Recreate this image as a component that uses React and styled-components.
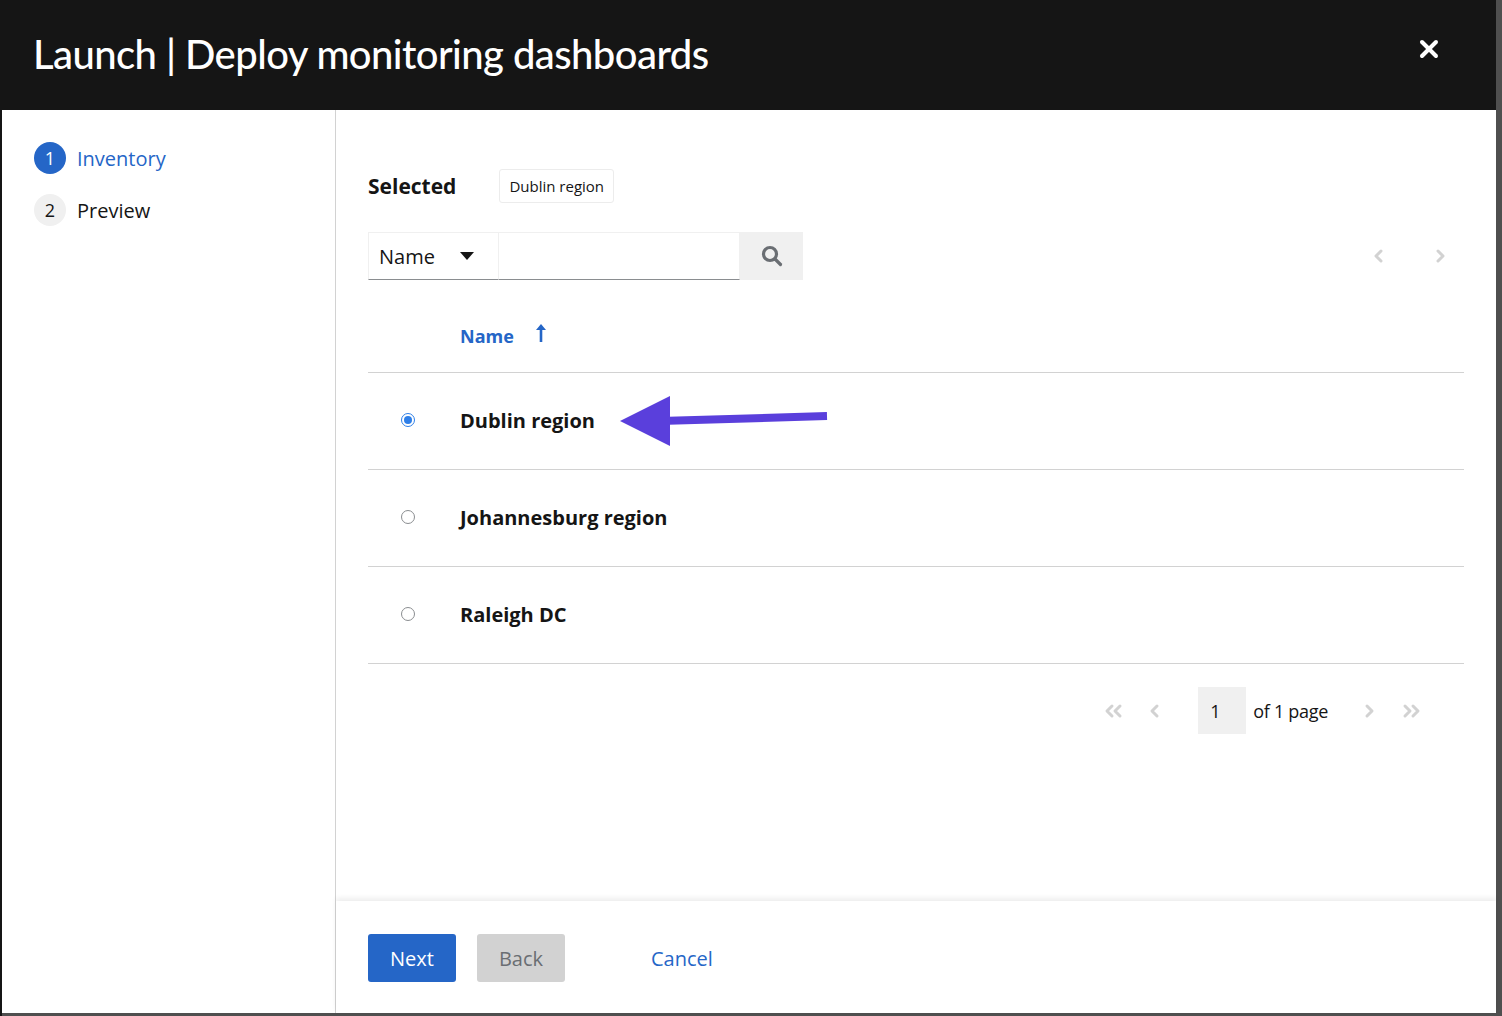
import React from "react";
import styled, { createGlobalStyle } from "styled-components";

const GlobalStyle = createGlobalStyle`
  *, *::before, *::after {
    box-sizing: border-box;
  }
  html, body {
    margin: 0;
    padding: 0;
    background: #151515;
  }
  body {
    font-family: "Open Sans", "Liberation Sans", sans-serif;
    color: #151515;
  }
`;

const Backdrop = styled.div`
  width: 1502px;
  height: 1016px;
  background: #4f4f4f;
  border-left: 2px solid #151515;
  padding: 0 6px 3px 0;
  display: flex;
`;

const Modal = styled.div`
  flex: 1;
  background: #fff;
  display: flex;
  flex-direction: column;
`;

const Header = styled.header`
  height: 110px;
  background: #151515;
  display: flex;
  align-items: center;
  justify-content: space-between;
  padding: 0 57px 0 31px;
  flex-shrink: 0;
`;

const Title = styled.h1`
  margin: 0 0 2px;
  color: #fff;
  font-family: "Lato", "Open Sans", sans-serif;
  font-weight: 500;
  font-size: 40px;
  letter-spacing: -0.57px;
`;

const CloseButton = styled.button`
  border: 0;
  background: none;
  padding: 0;
  margin-bottom: 12px;
  display: flex;
  color: #fff;
`;

const Body = styled.div`
  flex: 1;
  display: flex;
  min-height: 0;
`;

const Sidebar = styled.nav`
  width: 334px;
  flex-shrink: 0;
  border-right: 1px solid #d2d2d2;
  padding: 32px 0 0 32px;
  display: flex;
  flex-direction: column;
  gap: 20px;
`;

const Step = styled.div`
  display: flex;
  align-items: center;
  gap: 11px;
  font-size: 20px;
  color: ${(p) => (p.$active ? "#2566c7" : "#151515")};
`;

const StepNum = styled.span`
  width: 32px;
  height: 32px;
  border-radius: 50%;
  display: flex;
  align-items: center;
  justify-content: center;
  font-size: 18px;
  background: ${(p) => (p.$active ? "#2566c7" : "#f0f0f0")};
  color: ${(p) => (p.$active ? "#fff" : "#151515")};
`;

const Main = styled.main`
  flex: 1;
  display: flex;
  flex-direction: column;
`;

const Content = styled.section`
  flex: 1;
  padding: 59px 32px 0;
  position: relative;
`;

const SelectedRow = styled.div`
  display: flex;
  align-items: center;
  gap: 43px;
`;

const SelectedLabel = styled.span`
  font-weight: 700;
  font-size: 21px;
`;

const Chip = styled.span`
  border: 1px solid #ececec;
  border-radius: 3px;
  padding: 0 9px;
  height: 34px;
  display: flex;
  align-items: center;
  font-size: 15px;
`;

const Toolbar = styled.div`
  margin-top: 29px;
  display: flex;
  align-items: center;
`;

const FilterSelect = styled.div`
  width: 130px;
  height: 48px;
  border: 1px solid #f0f0f0;
  border-bottom-color: #8a8d90;
  border-right: 0;
  display: flex;
  align-items: center;
  justify-content: space-between;
  padding: 0 24px 0 10px;
  font-size: 20px;
`;

const SearchInput = styled.div`
  width: 242px;
  height: 48px;
  border: 1px solid #f0f0f0;
  border-bottom-color: #8a8d90;
`;

const SearchButton = styled.button`
  width: 63px;
  height: 48px;
  border: 0;
  background: #f0f0f0;
  display: flex;
  align-items: center;
  justify-content: center;
  color: #6a6e73;
`;

const TopPager = styled.div`
  margin-left: auto;
  display: flex;
  gap: 45px;
  padding-right: 16px;
  color: #d2d2d2;
`;

const HeadRow = styled.div`
  height: 93px;
  padding: 44px 0 0 92px;
  border-bottom: 1px solid #d2d2d2;
  display: flex;
  align-items: flex-start;
  gap: 22px;
  color: #2566c7;
  font-weight: 700;
  font-size: 18px;
  line-height: 24px;
`;

const Row = styled.div`
  height: 97px;
  border-bottom: 1px solid #d2d2d2;
  display: flex;
  align-items: center;
  padding: 0 0 2px 33px;
`;

const Radio = styled.span`
  width: 14px;
  height: 14px;
  border-radius: 50%;
  border: 1px solid ${(p) => (p.$checked ? "#2e7fe8" : "#8a8d90")};
  margin-right: 45px;
  display: flex;
  align-items: center;
  justify-content: center;
  &::after {
    content: "";
    width: 8px;
    height: 8px;
    border-radius: 50%;
    background: ${(p) => (p.$checked ? "#2e7fe8" : "transparent")};
  }
`;

const RowName = styled.span`
  font-weight: 700;
  font-size: 20px;
`;

const Pager = styled.div`
  margin-top: 23px;
  display: flex;
  justify-content: flex-end;
  align-items: center;
  padding-right: 19px;
  font-size: 18px;
  color: #d2d2d2;
`;

const PagerIcon = styled.span`
  display: flex;
  margin: 0 ${(p) => p.$gap || 0}px;
`;

const PageBox = styled.span`
  width: 48px;
  height: 47px;
  background: #f0f0f0;
  color: #151515;
  display: flex;
  align-items: center;
  padding-left: 12px;
  margin-left: 13px;
`;

const PageText = styled.span`
  color: #151515;
  margin: 0 33px 0 7px;
  letter-spacing: -0.3px;
`;

const Annotation = styled.svg`
  position: absolute;
  left: 284px;
  top: 280px;
`;

const Footer = styled.footer`
  height: 112px;
  flex-shrink: 0;
  box-shadow: 0 -3px 5px rgba(0, 0, 0, 0.07);
  display: flex;
  align-items: flex-start;
  padding: 33px 32px 0;
  gap: 21px;
`;

const Button = styled.button`
  height: 48px;
  border: 0;
  border-radius: 3px;
  font-family: inherit;
  font-size: 20px;
  background: ${(p) =>
    p.$variant === "primary" ? "#2566c7" : p.$variant === "link" ? "transparent" : "#d2d2d2"};
  color: ${(p) =>
    p.$variant === "primary" ? "#fff" : p.$variant === "link" ? "#2566c7" : "#6a6e73"};
  margin-left: ${(p) => (p.$variant === "link" ? "65px" : "0")};
  padding: ${(p) => (p.$variant === "link" ? "0" : "0 22px")};
`;

const Chevron = ({ dir = "left", double = false, size = 16 }) => (
  <svg
    width={double ? size + 6 : size}
    height={size}
    viewBox={double ? "0 0 22 16" : "0 0 16 16"}
    fill="none"
    stroke="currentColor"
    strokeWidth="3"
    strokeLinecap="round"
    strokeLinejoin="round"
  >
    {dir === "left" ? (
      double ? (
        <>
          <polyline points="9,3 4,8 9,13" />
          <polyline points="17,3 12,8 17,13" />
        </>
      ) : (
        <polyline points="10,3 5,8 10,13" />
      )
    ) : double ? (
      <>
        <polyline points="5,3 10,8 5,13" />
        <polyline points="13,3 18,8 13,13" />
      </>
    ) : (
      <polyline points="6,3 11,8 6,13" />
    )}
  </svg>
);

const rows = [
  { name: "Dublin region", checked: true },
  { name: "Johannesburg region" },
  { name: "Raleigh DC" },
];

export default function App() {
  return (
    <>
      <GlobalStyle />
      <Backdrop>
        <Modal>
          <Header>
            <Title>Launch | Deploy monitoring dashboards</Title>
            <CloseButton aria-label="Close">
              <svg width="20" height="20" viewBox="0 0 20 20" stroke="currentColor" strokeWidth="4" strokeLinecap="round">
                <line x1="3" y1="3" x2="17" y2="17" />
                <line x1="17" y1="3" x2="3" y2="17" />
              </svg>
            </CloseButton>
          </Header>
          <Body>
            <Sidebar>
              <Step $active>
                <StepNum $active>1</StepNum>
                Inventory
              </Step>
              <Step>
                <StepNum>2</StepNum>
                Preview
              </Step>
            </Sidebar>
            <Main>
              <Content>
                <SelectedRow>
                  <SelectedLabel>Selected</SelectedLabel>
                  <Chip>Dublin region</Chip>
                </SelectedRow>
                <Toolbar>
                  <FilterSelect>
                    Name
                    <svg width="14" height="8" viewBox="0 0 14 8">
                      <polygon points="0,0 14,0 7,8" fill="#151515" />
                    </svg>
                  </FilterSelect>
                  <SearchInput />
                  <SearchButton aria-label="Search">
                    <svg width="22" height="22" viewBox="0 0 22 22" fill="none" stroke="currentColor" strokeWidth="3.2" strokeLinecap="round">
                      <circle cx="9" cy="9" r="6.5" />
                      <line x1="14" y1="14" x2="19.5" y2="19.5" />
                    </svg>
                  </SearchButton>
                  <TopPager>
                    <Chevron dir="left" />
                    <Chevron dir="right" />
                  </TopPager>
                </Toolbar>
                <HeadRow>
                  <span>Name</span>
                  <svg width="10" height="18" viewBox="0 0 10 18" fill="#2566c7">
                    <polygon points="5,0 10,6 6.3,6 6.3,18 3.7,18 3.7,6 0,6" />
                  </svg>
                </HeadRow>
                {rows.map((r) => (
                  <Row key={r.name}>
                    <Radio $checked={r.checked} />
                    <RowName>{r.name}</RowName>
                  </Row>
                ))}
                <Pager>
                  <PagerIcon>
                    <Chevron dir="left" double />
                  </PagerIcon>
                  <PagerIcon $gap={22}>
                    <Chevron dir="left" />
                  </PagerIcon>
                  <PageBox>1</PageBox>
                  <PageText>of 1 page</PageText>
                  <PagerIcon>
                    <Chevron dir="right" />
                  </PagerIcon>
                  <PagerIcon $gap={23}>
                    <Chevron dir="right" double />
                  </PagerIcon>
                </Pager>
                <Annotation width="210" height="56" viewBox="0 0 210 56">
                  <line x1="40" y1="31" x2="207" y2="26" stroke="#5a3fdc" strokeWidth="8" />
                  <polygon points="0,31 50,6 50,56" fill="#5a3fdc" />
                </Annotation>
              </Content>
              <Footer>
                <Button $variant="primary">Next</Button>
                <Button>Back</Button>
                <Button $variant="link">Cancel</Button>
              </Footer>
            </Main>
          </Body>
        </Modal>
      </Backdrop>
    </>
  );
}
